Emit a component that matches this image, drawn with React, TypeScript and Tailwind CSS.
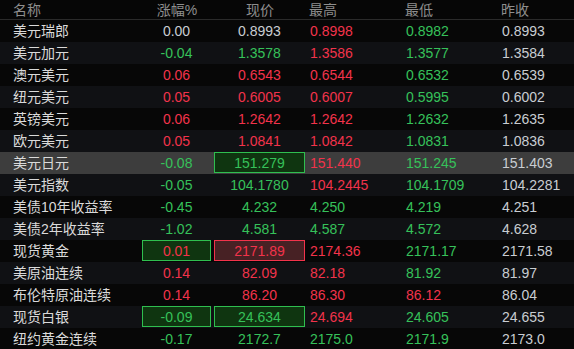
import React from "react";

type C = "r" | "g" | "n";
type Row = {
  name: string;
  chg: [string, C];
  price: [string, C];
  high: [string, C];
  low: [string, C];
  prev: string;
  chgBox?: "g" | "r";
  priceBox?: "g" | "r";
  hl?: boolean;
};

const rows: Row[] = [
  { name: "美元瑞郎", chg: ["0.00", "n"], price: ["0.8993", "n"], high: ["0.8998", "r"], low: ["0.8982", "g"], prev: "0.8993" },
  { name: "美元加元", chg: ["-0.04", "g"], price: ["1.3578", "g"], high: ["1.3586", "r"], low: ["1.3577", "g"], prev: "1.3584" },
  { name: "澳元美元", chg: ["0.06", "r"], price: ["0.6543", "r"], high: ["0.6544", "r"], low: ["0.6532", "g"], prev: "0.6539" },
  { name: "纽元美元", chg: ["0.05", "r"], price: ["0.6005", "r"], high: ["0.6007", "r"], low: ["0.5995", "g"], prev: "0.6002" },
  { name: "英镑美元", chg: ["0.06", "r"], price: ["1.2642", "r"], high: ["1.2642", "r"], low: ["1.2632", "g"], prev: "1.2635" },
  { name: "欧元美元", chg: ["0.05", "r"], price: ["1.0841", "r"], high: ["1.0842", "r"], low: ["1.0831", "g"], prev: "1.0836" },
  { name: "美元日元", chg: ["-0.08", "g"], price: ["151.279", "g"], high: ["151.440", "r"], low: ["151.245", "g"], prev: "151.403", priceBox: "g", hl: true },
  { name: "美元指数", chg: ["-0.05", "g"], price: ["104.1780", "g"], high: ["104.2445", "r"], low: ["104.1709", "g"], prev: "104.2281" },
  { name: "美债10年收益率", chg: ["-0.45", "g"], price: ["4.232", "g"], high: ["4.250", "g"], low: ["4.219", "g"], prev: "4.251" },
  { name: "美债2年收益率", chg: ["-1.02", "g"], price: ["4.581", "g"], high: ["4.587", "g"], low: ["4.572", "g"], prev: "4.628" },
  { name: "现货黄金", chg: ["0.01", "r"], price: ["2171.89", "r"], high: ["2174.36", "r"], low: ["2171.17", "g"], prev: "2171.58", chgBox: "g", priceBox: "r" },
  { name: "美原油连续", chg: ["0.14", "r"], price: ["82.09", "r"], high: ["82.18", "r"], low: ["81.92", "g"], prev: "81.97" },
  { name: "布伦特原油连续", chg: ["0.14", "r"], price: ["86.20", "r"], high: ["86.30", "r"], low: ["86.12", "r"], prev: "86.04" },
  { name: "现货白银", chg: ["-0.09", "g"], price: ["24.634", "g"], high: ["24.694", "r"], low: ["24.605", "g"], prev: "24.655", chgBox: "g", priceBox: "g" },
  { name: "纽约黄金连续", chg: ["-0.17", "g"], price: ["2172.7", "g"], high: ["2175.0", "g"], low: ["2171.9", "g"], prev: "2173.0" },
];

function col(c: C) {
  if (c === "r") return "text-[#f2334b]";
  if (c === "g") return "text-[#36c15a]";
  return "text-[#c9cdd2]";
}

function boxCls(b?: "g" | "r") {
  if (b === "g") return "bg-[#0f3510] border border-[#2fbf4f]";
  if (b === "r") return "bg-[#472124] border border-[#f2334b]";
  return "";
}

const grid = "grid grid-cols-[142px_70px_96px_96px_96px_1fr]";

export default function App() {
  return (
    <div
      className="w-[574px] h-[349px] overflow-hidden bg-[#060606] text-[14px] leading-none"
      style={{ fontFamily: '"Liberation Sans", "Noto Sans CJK SC", sans-serif' }}
    >
      <div className={`${grid} h-[20px] items-center border-b border-[#2a2a2a] text-[#8e8e8e]`}>
        <div className="pl-[13px]">名称</div>
        <div className="text-center">涨幅%</div>
        <div className="text-center">现价</div>
        <div className="pl-[1px]">最高</div>
        <div className="pl-[1px]">最低</div>
        <div className="pl-[1px]">昨收</div>
      </div>
      {rows.map((r, i) => (
        <div
          key={r.name}
          className={`${grid} h-[22px] ${r.hl ? "bg-[#3d3d3d]" : i % 2 === 1 ? "bg-[#101114]" : "bg-[#070707]"}`}
        >
          <div className="pl-[13px] flex items-center text-[#dadada]">{r.name}</div>
          <div className="pr-[1px] h-[21px]">
            <div className={`h-full flex items-center justify-center ${boxCls(r.chgBox)} ${col(r.chg[1])}`}>{r.chg[0]}</div>
          </div>
          <div className="pl-[2px] pr-[3px] h-[21px]">
            <div className={`h-full flex items-center justify-center ${boxCls(r.priceBox)} ${col(r.price[1])}`}>{r.price[0]}</div>
          </div>
          <div className={`pl-[2px] flex items-center ${col(r.high[1])}`}>{r.high[0]}</div>
          <div className={`pl-[2px] flex items-center ${col(r.low[1])}`}>{r.low[0]}</div>
          <div className="pl-[2px] flex items-center text-[#c9cdd2]">{r.prev}</div>
        </div>
      ))}
    </div>
  );
}
